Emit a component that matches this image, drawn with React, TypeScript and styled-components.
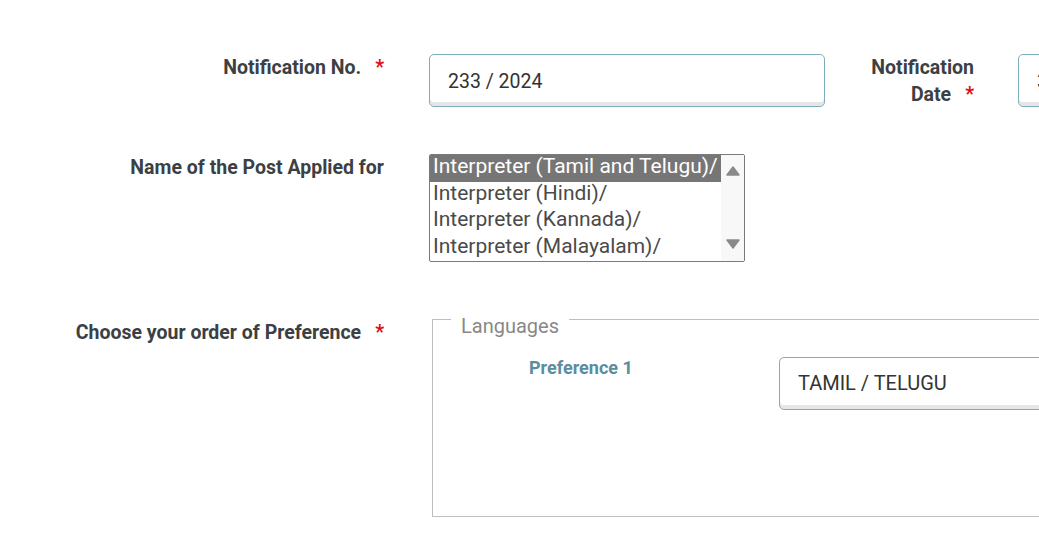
import React from 'react'
import styled, { createGlobalStyle } from 'styled-components'

const FONT = `Roboto, "Liberation Sans", Arial, sans-serif`

const Global = createGlobalStyle`
  html, body { margin: 0; padding: 0; background: #fff; overflow: hidden; }
  body { font-family: ${FONT}; }
`

const Page = styled.form`
  width: 1500px;
  padding-top: 52px;
`

const Row = styled.div<{ top?: number }>`
  display: flex;
  align-items: flex-start;
  margin-top: ${({ top }) => top ?? 0}px;
`

const Label = styled.label<{ width: number; offset?: number; left?: number }>`
  flex: 0 0 ${({ width }) => width}px;
  box-sizing: border-box;
  text-align: right;
  font-size: 19.5px;
  line-height: 27px;
  font-weight: 700;
  color: #3c4043;
  margin-top: ${({ offset }) => offset ?? 0}px;
  margin-left: ${({ left }) => left ?? 0}px;
`

const Req = styled.span`
  color: #e01010;
  margin-left: 14px;
`

const Field = styled.div<{ width: number; left: number }>`
  flex: 0 0 ${({ width }) => width}px;
  margin-left: ${({ left }) => left}px;
`

const Input = styled.div`
  box-sizing: border-box;
  height: 53px;
  margin-top: 2px;
  border: 1px solid #7eaebb;
  border-radius: 5px;
  box-shadow: inset 0 -4px 0 #e6e6e6;
  padding: 15px 18px 0;
  font-size: 19.5px;
  line-height: 24px;
  color: #333;
  white-space: nowrap;
  overflow: hidden;
`

const ListBox = styled.div`
  box-sizing: border-box;
  width: 316px;
  height: 108px;
  border: 1px solid #7a7a7a;
  border-radius: 2px;
  display: flex;
  overflow: hidden;
`

const Options = styled.ul`
  flex: 1;
  margin: 0;
  padding: 0;
  list-style: none;
  min-width: 0;
`

const Option = styled.li<{ selected?: boolean }>`
  height: 26.5px;
  line-height: 22px;
  padding-left: 3px;
  font-size: 21px;
  white-space: nowrap;
  overflow: hidden;
  color: ${({ selected }) => (selected ? '#fff' : '#4a4a4a')};
  background: ${({ selected }) => (selected ? '#767676' : 'transparent')};
`

const ScrollTrack = styled.div`
  flex: 0 0 23px;
  background: #f8f8f8;
  display: flex;
  flex-direction: column;
  justify-content: space-between;
  align-items: center;
  padding: 11px 0 12px;
`

const Fieldset = styled.fieldset`
  box-sizing: border-box;
  width: 800px;
  margin: 0 0 0 3px;
  padding: 0 0 106px;
  border: 1px solid #bdbdbd;
  border-radius: 0;
`

const Legend = styled.legend`
  margin-left: 18px;
  padding: 14px 10px 0;
  font-size: 20px;
  line-height: 22px;
  color: #888;
`

const PrefRow = styled.div`
  display: flex;
  align-items: flex-start;
  margin-top: 20px;
`

const PrefLabel = styled.div`
  flex: 0 0 346px;
  box-sizing: border-box;
  padding-left: 96px;
  font-size: 18px;
  line-height: 22px;
  font-weight: 700;
  color: #5a8e9e;
`

const PrefInput = styled(Input)`
  width: 400px;
  margin-top: 0;
  padding-top: 13px;
  font-size: 20px;
`

const Arrow = ({ up }: { up?: boolean }) => (
  <svg width="14" height="10" viewBox="0 0 14 10">
    <path d={up ? 'M7 1 L13 9 L1 9 Z' : 'M1 1 L13 1 L7 9 Z'} fill="#8a8a8a" stroke="#8a8a8a" strokeLinejoin="round" strokeWidth="1.5" />
  </svg>
)

const posts = [
  'Interpreter (Tamil and Telugu)/',
  'Interpreter (Hindi)/',
  'Interpreter (Kannada)/',
  'Interpreter (Malayalam)/',
]

export default function App() {
  return (
    <>
      <Global />
      <Page>
        <Row>
          <Label width={384} offset={2}>
            Notification No.<Req>*</Req>
          </Label>
          <Field width={396} left={45}>
            <Input>233 / 2024</Input>
          </Field>
          <Label width={131} offset={2} left={18}>
            Notification Date<Req>*</Req>
          </Label>
          <Field width={400} left={44}>
            <Input>30/04/2024</Input>
          </Field>
        </Row>

        <Row top={46}>
          <Label width={384} offset={0}>
            Name of the Post Applied for
          </Label>
          <Field width={316} left={45}>
            <ListBox>
              <Options>
                {posts.map((p, i) => (
                  <Option key={p} selected={i === 0}>{p}</Option>
                ))}
              </Options>
              <ScrollTrack>
                <Arrow up />
                <Arrow />
              </ScrollTrack>
            </ListBox>
          </Field>
        </Row>

        <Row top={39}>
          <Label width={384} offset={18}>
            Choose your order of Preference<Req>*</Req>
          </Label>
          <Field width={800} left={45}>
            <Fieldset>
              <Legend>Languages</Legend>
              <PrefRow>
                <PrefLabel>Preference 1</PrefLabel>
                <PrefInput>TAMIL / TELUGU</PrefInput>
              </PrefRow>
            </Fieldset>
          </Field>
        </Row>
      </Page>
    </>
  )
}
